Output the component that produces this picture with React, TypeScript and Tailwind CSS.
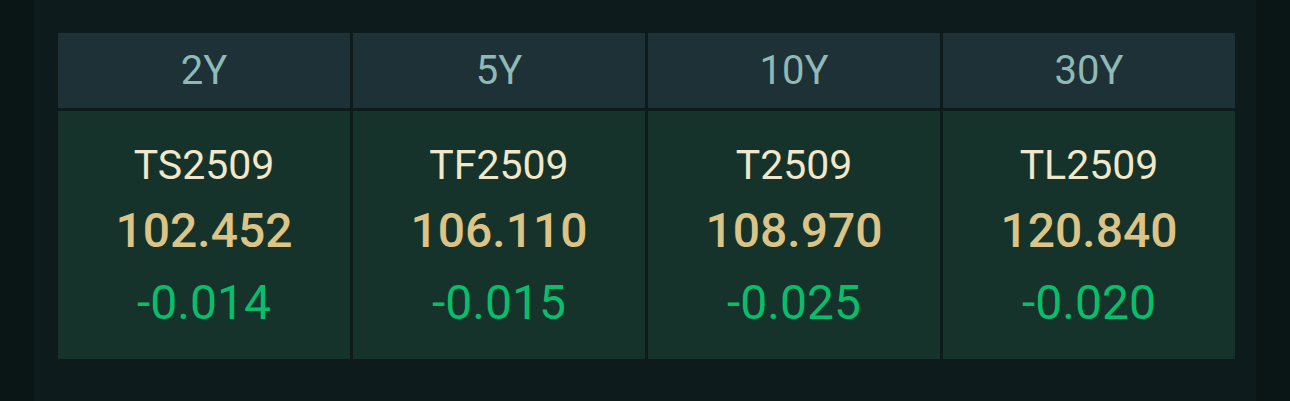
const CONTRACTS = [
  { tenor: '2Y', code: 'TS2509', price: '102.452', change: '-0.014' },
  { tenor: '5Y', code: 'TF2509', price: '106.110', change: '-0.015' },
  { tenor: '10Y', code: 'T2509', price: '108.970', change: '-0.025' },
  { tenor: '30Y', code: 'TL2509', price: '120.840', change: '-0.020' },
];

export default function App() {
  return (
    <div
      className="h-[401px] w-[1290px] bg-[#0a1615] px-[34px] overflow-hidden"
      style={{ fontFamily: 'Roboto, "Noto Sans", sans-serif' }}
    >
      <div className="h-full bg-[#0e1b1c] pl-[24px] pr-[21px] pt-[33px]">
        <div className="grid grid-cols-4 gap-x-[3px] gap-y-[3px]">
          {CONTRACTS.map((c) => (
            <div
              key={c.tenor + '-h'}
              className="h-[75px] bg-[#1e3137] flex items-center justify-center text-[40px] text-[#8fb9b6]"
            >
              {c.tenor}
            </div>
          ))}
          {CONTRACTS.map((c) => (
            <div
              key={c.tenor + '-b'}
              className="h-[248px] bg-[#15332a] flex flex-col items-center pt-[26px]"
            >
              <div className="leading-[56px] text-[41px] text-[#f3e7c9]">{c.code}</div>
              <div className="leading-[76px] text-[48px] font-medium text-[#dcc386]">{c.price}</div>
              <div className="leading-[68px] text-[48px] text-[#08bd6c]">{c.change}</div>
            </div>
          ))}
        </div>
      </div>
    </div>
  );
}
